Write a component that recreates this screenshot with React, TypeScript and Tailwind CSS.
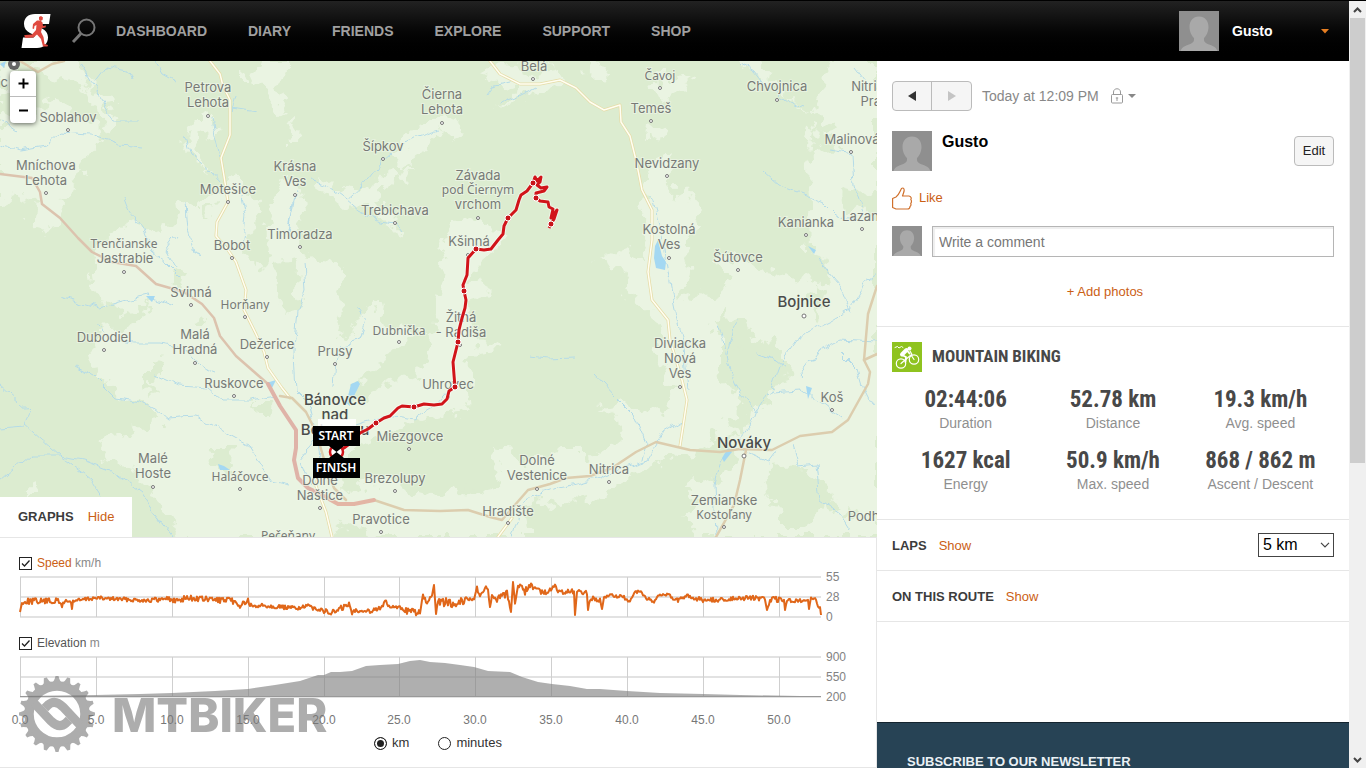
import React from "react";

type Size = "town" | "village" | "small";
type Place = { lines: string[]; x: number; y: number; size?: Size; dot?: [number, number] };

const places: Place[] = [
  { lines: ["Belá"], x: 534, y: 71, dot: [533, 79] },
  { lines: ["Čavoj"], x: 660, y: 80, size: "small", dot: [660, 88] },
  { lines: ["Temeš"], x: 651, y: 113, dot: [651, 121] },
  { lines: ["Chvojnica"], x: 777, y: 91, dot: [777, 100] },
  { lines: ["Nitrianske", "Pravno"], x: 882, y: 91 },
  { lines: ["Malinová"], x: 852, y: 144, dot: [851, 152] },
  { lines: ["Petrova", "Lehota"], x: 208, y: 92, dot: [208, 116] },
  { lines: ["Čierna", "Lehota"], x: 442, y: 99, dot: [442, 123] },
  { lines: ["Soblahov"], x: 68, y: 122, dot: [68, 130] },
  { lines: ["Mníchova", "Lehota"], x: 46, y: 170, dot: [46, 193] },
  { lines: ["Šípkov"], x: 383, y: 151, dot: [383, 159] },
  { lines: ["Krásna", "Ves"], x: 295, y: 171, dot: [295, 195] },
  { lines: ["Motešice"], x: 228, y: 194, dot: [228, 202] },
  { lines: ["Trebichava"], x: 395, y: 215, dot: [395, 223] },
  { lines: ["Timoradza"], x: 300, y: 239, dot: [300, 247] },
  { lines: ["Bobot"], x: 232, y: 250, dot: [232, 258] },
  { lines: ["Trenčianske"], x: 124, y: 248, size: "small" },
  { lines: ["Jastrabie"], x: 125, y: 263, dot: [124, 272] },
  { lines: ["Závada"], x: 478, y: 180 },
  { lines: ["pod Čiernym"], x: 478, y: 194, size: "small" },
  { lines: ["vrchom"], x: 478, y: 209, dot: [478, 218] },
  { lines: ["Nevidzany"], x: 667, y: 168, dot: [667, 176] },
  { lines: ["Kostolná", "Ves"], x: 669, y: 234, dot: [669, 258] },
  { lines: ["Kanianka"], x: 806, y: 227, dot: [806, 235] },
  { lines: ["Lazany"], x: 864, y: 221, dot: [862, 229] },
  { lines: ["Šútovce"], x: 738, y: 262, dot: [738, 270] },
  { lines: ["Kšinná"], x: 469, y: 246, dot: [468, 255] },
  { lines: ["Svinná"], x: 191, y: 297, dot: [191, 305] },
  { lines: ["Horňany"], x: 245, y: 309, size: "small", dot: [245, 317] },
  { lines: ["Dubodiel"], x: 104, y: 342, dot: [104, 350] },
  { lines: ["Malá", "Hradná"], x: 195, y: 339, dot: [195, 363] },
  { lines: ["Dežerice"], x: 267, y: 349, dot: [267, 357] },
  { lines: ["Prusy"], x: 335, y: 356, dot: [335, 364] },
  { lines: ["Dubnička"], x: 399, y: 335, size: "small", dot: [399, 342] },
  { lines: ["Žitná", "- Radiša"], x: 461, y: 322, dot: [460, 345] },
  { lines: ["Bojnice"], x: 804, y: 307, size: "town", dot: [804, 316] },
  { lines: ["Ruskovce"], x: 234, y: 388, dot: [234, 396] },
  { lines: ["Diviacka", "Nová", "Ves"], x: 680, y: 348, dot: [680, 387] },
  { lines: ["Uhrovec"], x: 448, y: 389, dot: [448, 397] },
  { lines: ["Bánovce", "nad", "Bebravou"], x: 335, y: 405, size: "town" },
  { lines: ["Koš"], x: 832, y: 402, dot: [832, 410] },
  { lines: ["Miezgovce"], x: 410, y: 441, dot: [409, 449] },
  { lines: ["Nováky"], x: 744, y: 448, size: "town", dot: [744, 456] },
  { lines: ["Malé", "Hoste"], x: 153, y: 463, dot: [153, 487] },
  { lines: ["Haláčovce"], x: 240, y: 481, size: "small", dot: [240, 489] },
  { lines: ["Dolné", "Naštice"], x: 320, y: 485, dot: [320, 508] },
  { lines: ["Brezolupy"], x: 395, y: 483, dot: [395, 491] },
  { lines: ["Dolné", "Vestenice"], x: 537, y: 465, dot: [537, 489] },
  { lines: ["Nitrica"], x: 609, y: 474, dot: [609, 482] },
  { lines: ["Hradište"], x: 508, y: 516, dot: [508, 523] },
  { lines: ["Pravotice"], x: 381, y: 524, dot: [381, 532] },
  { lines: ["Pečeňany"], x: 288, y: 540, size: "small" },
  { lines: ["Zemianske"], x: 724, y: 505 },
  { lines: ["Kostoľany"], x: 724, y: 519, size: "small", dot: [724, 527] },
  { lines: ["Podhradie"], x: 879, y: 521 },
];

const clearings = [
  "M0 108 L14 118 L38 122 L42 100 L55 94 L62 106 L72 118 L98 124 L100 140 L96 150 L82 160 L86 172 L70 178 L76 190 L60 196 L66 212 L46 236 L34 220 L36 204 L20 194 L0 204 Z",
  "M30 61 H78 L88 86 L98 92 L112 94 L118 104 L104 106 L110 118 L120 124 L106 130 L98 112 L84 84 L66 74 L56 82 L40 72 Z",
  "M0 64 L18 61 L12 90 L0 100 Z",
  "M188 128 L200 116 L214 116 L220 132 L206 138 L196 134 L192 146 L204 158 L210 172 L196 164 L184 150 Z",
  "M252 76 L260 61 L288 61 L286 76 L276 84 L290 110 L284 116 L270 100 L260 84 Z",
  "M288 122 L297 126 L296 142 L290 142 Z",
  "M240 74 l8 -2 l0 6 l-8 0 Z",
  "M92 286 L90 262 L100 244 L118 232 L132 222 L146 228 L160 240 L176 214 L184 204 L198 210 L206 196 L222 188 L234 172 L246 190 L260 206 L256 228 L246 246 L254 262 L262 276 L272 262 L264 232 L274 208 L276 190 L288 176 L300 192 L304 214 L296 236 L306 256 L330 260 L344 272 L336 290 L342 312 L336 330 L350 338 L362 316 L380 300 L384 326 L408 328 L410 342 L396 350 L378 362 L368 376 L350 386 L348 402 L364 398 L384 386 L404 380 L424 366 L432 340 L434 320 L440 286 L446 262 L440 244 L444 232 L462 216 L484 222 L500 232 L512 236 L500 246 L482 262 L470 278 L490 288 L484 294 L468 300 L470 326 L480 340 L504 346 L500 350 L474 352 L462 364 L474 370 L474 380 L464 394 L472 404 L454 414 L436 426 L450 434 L430 450 L444 462 L436 480 L462 492 L484 496 L504 484 L492 456 L508 444 L520 470 L540 456 L562 448 L578 448 L590 462 L606 450 L620 442 L616 414 L600 408 L620 404 L640 412 L664 408 L672 390 L664 372 L656 350 L662 324 L644 308 L622 290 L632 276 L600 260 L628 248 L644 262 L650 236 L640 206 L644 184 L652 166 L668 152 L672 168 L670 196 L680 202 L688 188 L696 204 L704 226 L690 232 L684 252 L690 276 L682 300 L700 292 L720 304 L716 330 L724 346 L734 350 L732 372 L740 386 L744 406 L730 424 L738 436 L720 442 L706 442 L694 452 L674 454 L660 460 L640 474 L620 484 L604 498 L576 500 L560 504 L536 500 L524 508 L530 537 H420 L380 537 L350 522 L330 537 H180 L166 514 L150 490 L130 470 L108 462 L98 436 L120 434 L134 440 L128 422 L148 432 L160 418 L146 400 L122 402 L110 382 L96 370 L92 340 L98 330 L124 328 L142 318 L150 300 L124 314 L106 304 Z",
  "M410 160 L430 146 L440 130 L456 140 L468 124 L440 116 L424 126 L410 138 L392 150 L400 168 L412 168 L406 182 L388 172 L372 186 L352 192 L328 182 L316 178 L314 184 L332 196 L346 208 L374 206 L396 232 L400 222 L376 196 L396 180 Z",
  "M480 72 L500 61 L516 64 L520 76 L560 70 L566 84 L540 90 L520 100 L496 108 L520 90 L504 84 Z",
  "M586 61 L604 64 L602 78 L588 76 Z",
  "M654 70 L672 84 L686 80 L690 86 L668 98 L656 92 Z",
  "M648 124 L662 130 L656 140 L646 142 Z",
  "M736 61 H760 L790 100 L812 112 L826 80 L832 61 H877 V537 H790 L768 512 L770 488 L786 470 L812 484 L830 496 L822 514 L800 530 L826 537 H700 L680 518 L704 504 L684 488 L700 478 L716 482 L736 462 L728 446 L748 424 L752 400 L766 410 L776 384 L774 350 L756 342 L748 326 L722 314 L716 304 L730 278 L712 264 L730 252 L756 268 L776 272 L792 282 L808 276 L832 286 L826 260 L808 248 L806 168 L814 156 L808 140 L812 128 L834 134 L824 120 L812 112 Z",
  "M24 490 L38 488 L36 500 L20 500 Z",
];

const woods = [
  "M860 196 L877 190 V224 L858 204 L842 212 L840 190 Z",
  "M812 152 L840 148 L816 128 Z",
  "M768 470 L800 468 L826 486 L836 504 L820 514 L800 528 L780 528 L776 504 L760 490 Z",
  "M846 506 L860 514 L848 520 Z",
  "M280 262 L298 260 L294 290 L300 302 L286 314 L278 300 Z",
  "M148 360 L162 362 L160 380 L150 382 L152 396 L142 388 L148 376 Z",
  "M256 402 L276 402 L272 416 L258 416 Z",
  "M208 450 L234 450 L232 472 L226 474 L216 462 Z",
  "M352 448 L386 438 L412 424 L440 416 L470 420 L480 440 L470 484 L440 496 L410 492 L398 480 L360 484 L344 494 L342 478 L352 466 Z",
  "M204 206 L212 204 L210 218 L204 216 Z",
  "M176 272 L186 276 L182 288 L172 282 Z",
  "M190 322 L206 318 L204 326 L190 326 Z",
  "M816 284 L826 296 L820 318 L812 304 Z",
  "M720 340 L750 346 L770 340 L790 368 L770 396 L752 412 L734 396 L720 368 Z",
  "M706 426 L716 430 L714 442 L702 436 Z",
];

const rivers = [
  "M80 64 L90 80 L100 92 L106 110 L114 120 L140 120",
  "M0 145 L20 150 L45 146 L60 132 L90 134 L120 144 L142 146",
  "M0 120 L14 130",
  "M94 82 L106 66 L128 70 L132 80",
  "M154 61 L162 74 L176 82",
  "M184 136 L190 154 L206 166 L218 180",
  "M212 118 L216 140 L220 156 M232 108 L256 112 M236 94 L232 112",
  "M124 196 L130 212 L144 232 L152 252 L166 264 L178 276",
  "M186 204 L188 230 L194 250 L200 258 M176 236 L166 250 L176 268",
  "M242 196 L246 214 L242 250 M294 196 L288 230 L292 212 L296 190",
  "M310 180 L330 188 L346 200 L362 186 L382 160 L402 142 L440 130",
  "M346 200 L360 212 L380 222 L396 224 L402 232",
  "M60 296 L100 308 L130 300 L148 296 L174 306",
  "M304 262 L306 290 L298 310 L294 350 L296 392 L310 406 L318 440 L322 480",
  "M0 385 L30 412 L24 424 L42 440 L60 456 L84 460 L110 470 L140 492 L152 510 L172 537",
  "M0 428 L24 426 M0 482 L30 456 L60 456 L90 478 L104 500 L110 520",
  "M96 322 L110 340 L130 344 L160 344 L184 348 L200 366 L216 372",
  "M76 366 L94 376 L116 398 L130 400 L140 402 L156 410 L166 418 L196 416 L222 430 L248 444 L262 466 L272 480 L290 484",
  "M154 374 L180 386 L208 388 L222 400 L252 400 L276 396",
  "M338 350 L336 360 L334 386 M340 346 L360 340 L366 320 L356 306",
  "M318 438 L300 460 L310 486",
  "M350 426 L390 416 L412 420 L436 406 L452 388",
  "M530 356 L548 358 L574 357",
  "M594 372 L616 396 L634 414 L646 442 L642 460",
  "M684 420 L664 432 L648 460 L622 468 L600 478 L578 484 L550 490 L530 496 L520 510 L512 537",
  "M652 196 L660 230 L666 262 L672 292 L678 320 L684 346 L688 390",
  "M718 322 L724 340 L728 366 L740 392 L756 410 L750 426 L738 440 L720 462 L714 484 L716 537",
  "M736 318 L732 336 L728 354",
  "M756 412 L772 388 L782 360 L796 340 L806 334 L830 322 L850 310 L866 282 L877 274",
  "M772 392 L800 390 L824 406 L842 420 M758 354 L776 360 L786 368",
  "M800 376 L820 350 L840 340 L877 342",
  "M840 352 L858 370 L864 390 L872 406",
  "M764 172 L780 186 L806 196 L824 204 L836 216 L862 222",
  "M740 62 L756 72 L770 90 L788 102 L804 108",
  "M830 150 L852 154 L854 186 L864 214 M854 66 L866 82",
  "M792 446 L798 466 L816 464 L820 500 L840 514 L850 530",
  "M740 450 L768 462 L780 446",
  "M820 261 L838 284 L850 312",
  "M500 104 L520 96 L536 88 M486 94 L492 86 L510 82",
];

const valleyRoads = [
  "M210 61 L220 74 L223 86 L230 100 L230 135 L221 158 L224 176 L228 202 L217 222 L216 236 L228 250 L236 262 L246 290 L244 310 L256 334 L264 352 L268 368 L282 388 L290 398",
  "M490 61 L500 74 L520 84 L540 84 L560 80 L576 88 L590 102 L604 110 L620 105 L621 122 L630 136 L636 160 L642 190 L652 210 L652 240 L648 272 L652 300 L668 320 L670 340 L682 380 L687 400 L684 420 L680 446",
  "M320 468 L316 486 L326 512 L332 537 M512 518 L498 537",
];

const route =
  "M336 452 L344 448 L352 442 L360 433 L368 429 L376 423 L384 418 L390 416 L398 408 L402 406 L414 407 L424 404 L434 405 L442 404 L447 399 L449 391 L455 387 L454 375 L453 362 L456 350 L458 342 L459 330 L462 318 L465 308 L466 300 L464 291 L463 285 L467 275 L468 258 L476 249 L484 250 L491 249 L498 240 L503 234 L504 226 L508 218 L516 210 L519 200 L521 195 L527 191 L533 183 L535 177 L537 181 L541 177 L540 182 L537 185 L541 188 L547 187 L544 191 L536 193 L536 198 L540 201 L548 202 L549 207 L553 209 L551 218 L557 210 L554 219 L551 224 L549 228";

const stops: [number, number][] = [
  [376, 423], [414, 407], [455, 387], [458, 342], [464, 291],
  [476, 249], [508, 218], [533, 183], [536, 198], [551, 224],
];

const speedKeys: [number, number, number][] = [
  [20, 612, 0], [22, 603, 1], [27, 601, 3], [58, 601, 3], [62, 606, 2], [64, 601, 3], [71, 602, 1], [72, 609, 0], [73, 601, 2],
  [95, 598, 2], [140, 600, 2], [162, 600, 3], [165, 597, 2], [173, 601, 3], [186, 598, 3], [233, 601, 3], [238, 606, 3],
  [248, 601, 3], [252, 608, 3], [260, 605, 2], [290, 608, 2], [310, 607, 3], [316, 607, 3], [320, 610, 2], [332, 613, 3], [340, 609, 3],
  [349, 604, 2], [352, 614, 1], [354, 610, 2], [370, 611, 2], [382, 607, 2], [386, 601, 2], [389, 607, 2], [402, 608, 2], [408, 611, 4], [420, 613, 3],
  [423, 596, 2], [426, 602, 3], [432, 598, 3], [434, 585, 0], [436, 614, 0], [438, 602, 3], [442, 602, 4], [456, 603, 5], [464, 600, 4],
  [474, 598, 2], [477, 588, 2], [480, 597, 2], [486, 586, 1], [488, 590, 1], [490, 607, 1], [492, 598, 3], [500, 599, 4], [507, 594, 5],
  [511, 612, 0], [513, 582, 0], [515, 603, 3], [518, 585, 2], [524, 592, 5], [528, 586, 4], [534, 586, 4], [543, 593, 2],
  [550, 591, 3], [555, 586, 2], [560, 593, 3], [574, 592, 3], [575, 615, 0], [577, 592, 3], [587, 592, 3], [588, 610, 0],
  [590, 599, 3], [600, 600, 3], [602, 609, 0], [604, 596, 2], [622, 596, 2], [630, 603, 2], [634, 594, 3], [641, 592, 3],
  [645, 597, 2], [655, 602, 2], [660, 594, 2], [670, 596, 2], [677, 601, 3], [685, 597, 3], [705, 600, 3], [720, 600, 2],
  [735, 598, 2], [753, 598, 3], [765, 599, 2], [767, 610, 0], [770, 600, 3], [784, 599, 3], [785, 610, 0], [787, 600, 2],
  [800, 601, 2], [808, 599, 2], [809, 609, 0], [811, 598, 1], [816, 599, 1], [818, 608, 2], [820, 607, 1], [821, 615, 0],
];

function speedPath() {
  let d = "";
  let seed = 7;
  for (let i = 0; i < speedKeys.length - 1; i++) {
    const [x0, y0, a0] = speedKeys[i];
    const [x1, y1, a1] = speedKeys[i + 1];
    for (let x = x0; x < x1; x++) {
      const t = (x - x0) / (x1 - x0);
      seed = (seed * 1103515245 + 12345) % 2147483648;
      const noise = (seed / 2147483648 - 0.5) * 2 * (a0 + (a1 - a0) * t);
      d += `${d ? "L" : "M"}${x} ${(y0 + (y1 - y0) * t + noise).toFixed(1)}`;
    }
  }
  return d + "L821 615";
}

const elevation =
  "M20 696 L96 695 L140 694 L172 693 L215 691 L248 689 L275 685 L300 681 L318 675 L324 675 L331 672 L340 672 L352 671 L366 666 L380 665 L398 664 L410 661 L420 660 L430 662 L445 663 L460 665 L474 667 L488 671 L510 672 L522 677 L538 682 L552 684 L570 686 L587 689 L600 689 L627 691 L660 693 L703 694 L740 695 L800 696 L821 697 V697 H20 Z";

const ticks = [20, 96, 172, 248, 324, 399, 475, 551, 627, 703, 779];

const labelStyles: Record<Size, string> = {
  town: "fill-[#4a4c4a] text-[15px] font-medium",
  village: "fill-[#777a76] text-[13px]",
  small: "fill-[#777a76] text-[12px]",
};

function PlaceLabel({ place }: { place: Place }) {
  const size = place.size ?? "village";
  const family = size === "small" ? '"Noto Sans", sans-serif' : 'Inter, "Noto Sans", sans-serif';
  return (
    <g>
      {place.dot && <circle cx={place.dot[0]} cy={place.dot[1]} r={size === "town" ? 2 : 1.5} fill="#fff" stroke="#777" strokeWidth="1" />}
      <text
        textAnchor="middle"
        className={labelStyles[size]}
        fontFamily={family}
        stroke="#eef6e8"
        strokeWidth="2"
        strokeOpacity="0.7"
        paintOrder="stroke"
      >
        {place.lines.map((line, i) => (
          <tspan key={line} x={place.x} y={place.y + i * 15}>{line}</tspan>
        ))}
      </text>
    </g>
  );
}

function Flag({ x, y, text }: { x: number; y: number; text: string }) {
  return (
    <g>
      <rect x={x - 23} y={y} width="47" height="20" fill="#000" />
      <text x={x} y={y + 14} textAnchor="middle" fontFamily='"Noto Sans", sans-serif' className="fill-white text-[12px] font-semibold">{text}</text>
    </g>
  );
}

function RouteMap() {
  return (
    <div className="relative">
      <svg viewBox="0 61 877 476" className="block h-auto w-full" role="img" aria-label="Route map">
        <defs>
          <filter id="ragged" x="0" y="0" width="1" height="1">
            <feTurbulence type="fractalNoise" baseFrequency="0.07" numOctaves="3" seed="4" result="n" />
            <feDisplacementMap in="SourceGraphic" in2="n" scale="26" xChannelSelector="R" yChannelSelector="G" />
          </filter>
          <filter id="wavy" x="0" y="0" width="1" height="1">
            <feTurbulence type="fractalNoise" baseFrequency="0.08" numOctaves="2" seed="9" result="n" />
            <feDisplacementMap in="SourceGraphic" in2="n" scale="10" xChannelSelector="R" yChannelSelector="G" />
          </filter>
        </defs>
        <rect y="61" width="877" height="476" fill="#dcecd0" />
        <g filter="url(#ragged)">
          <rect x="-20" y="41" width="917" height="516" fill="#dcecd0" />
          {clearings.map((d) => <path key={d} d={d} fill="#eaf4e2" />)}
          {woods.map((d) => <path key={d} d={d} fill="#dcecd0" />)}
        </g>
        <g filter="url(#wavy)" fill="none" stroke="#b4dbe8" strokeWidth="1">
          {rivers.map((d) => <path key={d} d={d} />)}
        </g>
        <g fill="#a4d8f2">
          <path d="M655 246 L658 240 L662 256 L666 262 L665 270 L656 268 L654 258 Z" />
          <path d="M722 458 L728 448 L732 452 L724 462 Z" />
          <path d="M348 396 L351 384 L358 381 L360 384 L354 396 Z M345 402 L350 396 L350 406 Z" />
          <path d="M146 296 L155 296 L152 302 Z M218 464 L224 466 L230 470 L220 470 Z" />
          <path d="M808 246 L816 250 L814 254 Z M806 386 L812 388 L808 399 Z M0 64 L6 61 L4 68 Z" />
          <path d="M266 383 L276 380 L272 388 Z" />
        </g>
        <g fill="none" strokeLinejoin="round" strokeLinecap="round">
          <g stroke="#e6dca8" strokeWidth="3">
            {valleyRoads.map((d) => <path key={d} d={d} />)}
          </g>
          <g stroke="#fffef2" strokeWidth="1.500">
            {valleyRoads.map((d) => <path key={d} d={d} />)}
          </g>
          <g stroke="#dccdae" strokeWidth="2.500">
            <path d="M280 396 L292 398 L306 412 L316 432 L326 466 L334 488 L346 500" />
            <path d="M374 500 L404 510 L440 511 L468 510 L490 517 L502 520 L514 506 L528 490 L550 484 L566 478 L590 476 L612 468 L636 452 L656 442 L690 450 L720 452 L740 449 L772 450 L800 436 L832 432 L848 420 L868 384 L870 372 L864 360 L868 314 L877 286" />
            <path d="M746 450 L740 480 L734 505 L716 537 M864 360 L877 354" />
            <path d="M20 61 L38 72 L52 64 L64 61" />
          </g>
          <path d="M0 174 L32 178 L40 192 L42 204 L60 218 L78 238 L92 252 L112 262 L136 266 L156 284 L184 292 L202 304 L214 318 L220 336 L236 356 L268 384" stroke="#dcc3ae" strokeWidth="2.500" />
          <path d="M268 384 L280 406 L296 430 L296 448 L294 460 L298 478 L308 488 L320 494" stroke="#dfb3a8" strokeWidth="4" />
          <path d="M320 494 L338 504 L354 504 L374 500" stroke="#e3b5a5" strokeWidth="4" />
        </g>
        {places.map((p) => <PlaceLabel key={p.lines.join(" ") + p.x} place={p} />)}
        <circle cx="14" cy="64" r="6" fill="#666" />
        <circle cx="14" cy="64" r="2" fill="#fff" />
        <text x="-10" y="87" className="fill-[#777a76] text-[13px]" fontFamily="Inter, sans-serif">čic</text>
        <path d={route} fill="none" stroke="#fff" strokeOpacity="0.5" strokeWidth="5" strokeLinejoin="round" />
        <path d={route} fill="none" stroke="#d1141a" strokeWidth="3" strokeLinejoin="round" />
        {stops.map(([x, y]) => <circle key={`${x}-${y}`} cx={x} cy={y} r="3" fill="#c8141a" stroke="#fff" strokeWidth="1" />)}
        <rect x="318" y="419" width="38" height="7" fill="#fff" fillOpacity="0.85" />
        <circle cx="336.500" cy="452" r="6.500" fill="#fff" stroke="#d1141a" strokeWidth="2.500" />
        <path d="M329 446 H344 L336.500 452 Z M329 458 H344 L336.500 452 Z" fill="#000" />
        <Flag x={336} y={426} text="START" />
        <Flag x={336} y={458} text="FINISH" />
      </svg>
      <div className="absolute left-2.5 top-2.5 flex w-[26px] flex-col divide-y divide-[#bbb] overflow-hidden rounded bg-white shadow-[0_1px_5px_rgba(0,0,0,0.6)]">
        <button type="button" aria-label="Zoom in" className="flex h-[26px] items-center justify-center">
          <svg width="11" height="11" viewBox="0 0 11 11"><path d="M5.500 0.500V10.500M0.500 5.500H10.500" stroke="#000" strokeWidth="2" /></svg>
        </button>
        <button type="button" aria-label="Zoom out" className="flex h-[26px] items-center justify-center">
          <svg width="11" height="11" viewBox="0 0 11 11"><path d="M1 5.500H10" stroke="#000" strokeWidth="2" /></svg>
        </button>
      </div>
      <div className="absolute bottom-0 left-0 flex h-10 items-center gap-3.5 bg-white px-[18px] text-[13px]">
        <h2 className="font-bold text-[#3c3c3c]">GRAPHS</h2>
        <a href="#graphs" className="text-[#cb6015]">Hide</a>
      </div>
    </div>
  );
}

function Grid({ rows, labels }: { rows: number[]; labels: string[] }) {
  return (
    <g>
      {rows.map((y) => <path key={y} d={`M20 ${y}H821`} stroke="#e2e2e2" strokeWidth="2" />)}
      {ticks.map((x) => <path key={x} d={`M${x + 0.5} ${rows[0]}V${rows[2]}`} stroke="#cfcfcf" strokeWidth="1" />)}
      {labels.map((l, i) => (
        <text key={l} x="826" y={rows[i] + 4} className="fill-[#828282] text-[12px]">{l}</text>
      ))}
    </g>
  );
}

const tickBox = "grid h-[13px] w-[13px] appearance-none place-content-center border border-[#222] bg-white";

function GraphToggle({ id, name, unit, color }: { id: string; name: string; unit: string; color: string }) {
  return (
    <div className="flex h-5 items-center gap-[5px] pl-[19px] text-[12px]">
      <span className="relative flex">
        <input id={id} type="checkbox" defaultChecked className={tickBox} />
        <svg className="pointer-events-none absolute left-0 top-0" width="13" height="13" viewBox="0 0 13 13">
          <path d="M3 6.500L5.500 9L10.500 3.500" fill="none" stroke="#222" strokeWidth="1.300" />
        </svg>
      </span>
      <label htmlFor={id} className="text-[#888]"><span className={color}>{name}</span> {unit}</label>
    </div>
  );
}

function Gear() {
  const teeth = Array.from({ length: 20 }, (_, i) => i * 18);
  return (
    <svg width="78" height="78" viewBox="-39 -39 78 78" aria-hidden="true">
      <circle r="28" fill="none" stroke="#777" strokeWidth="9.500" />
      {teeth.map((a) => <path key={a} d="M-5.200 -31 Q-2.500 -33 -1.500 -38 H1.500 Q2.500 -33 5.200 -31 Z" fill="#777" transform={`rotate(${a})`} />)}
      <path d="M-23 -11 L-6 7 Q2 15 9 9 L12 6 M23 11 L6 -7 Q-2 -15 -9 -9 L-12 -6" fill="none" stroke="#777" strokeWidth="9" />
    </svg>
  );
}

function Graphs() {
  return (
    <section className="relative border-b border-r border-t border-[#e6e6e6] pb-3.5 pt-[15px]">
      <GraphToggle id="speed" name="Speed" unit="km/h" color="text-[#cb6015]" />
      <svg viewBox="0 573 876 50" className="block h-auto w-full overflow-visible" role="img" aria-label="Speed graph">
        <Grid rows={[577, 597, 617]} labels={["55", "28", "0"]} />
        <path d={speedPath()} fill="none" stroke="#e0671a" strokeWidth="2" strokeLinejoin="round" />
      </svg>
      <div className="h-2.5" />
      <GraphToggle id="elevation" name="Elevation" unit="m" color="text-[#555]" />
      <svg viewBox="0 653 876 80" className="block h-auto w-full overflow-visible" role="img" aria-label="Elevation graph">
        <Grid rows={[657, 677, 697]} labels={["900", "550", "200"]} />
        <path d={elevation} fill="#808080" fillOpacity="0.63" />
        <path d="M20 696.500H821" stroke="#999" />
        {ticks.map((x, i) => (
          <text key={x} x={x} y="724" textAnchor="middle" className="fill-[#777] text-[12px]">{(i * 5).toFixed(1)}</text>
        ))}
      </svg>
      <fieldset className="flex h-5 items-center justify-center gap-[29px] text-[13px] text-[#333]">
        <label className="flex items-center gap-[5px]">
          <input type="radio" name="axis" defaultChecked className="h-[13px] w-[13px] appearance-none rounded-full border border-[#222] bg-[#222] shadow-[inset_0_0_0_2px_white]" />
          km
        </label>
        <label className="flex items-center gap-[5px]">
          <input type="radio" name="axis" className="h-[13px] w-[13px] appearance-none rounded-full border border-[#222] bg-white" />
          minutes
        </label>
      </fieldset>
      <div className="pointer-events-none absolute bottom-3.5 left-[18px] flex items-center gap-4 opacity-60">
        <Gear />
        <span className="font-[Inter,sans-serif] text-[47px] font-extrabold leading-none text-[#777]">MTBIKER</span>
      </div>
    </section>
  );
}

function Avatar({ className }: { className: string }) {
  return (
    <svg viewBox="0 0 40 40" className={className} role="img" aria-label="Gusto">
      <rect width="40" height="40" fill="#8f8f8f" />
      <path d="M20 5.500C26 5.500 29.500 10 29.500 16C29.500 21 27 25 25 27C24.500 31 26.500 32 30 33.500C34 35 37 36 38.500 40H1.500C3 36 6 35 10 33.500C13.500 32 15.500 31 15 27C13 25 10.500 21 10.500 16C10.500 10 14 5.500 20 5.500Z" fill="#a9a9a9" />
    </svg>
  );
}

function Logo() {
  return (
    <svg width="30" height="36" viewBox="0 0 30 36" aria-hidden="true">
      <path d="M29.500 1H14C7 1 3 5 3 11C3 15 5 18 9 20L13 22C14 23 13.500 24.500 12 24.500H2L0.500 35H16C23 35 27 30 27 24.500C27 20 24.500 17.500 21 15.500L18 13.500C17 12.500 17.500 11 19 11H28Z" fill="#fff" />
      <path d="M16 7.500L19.500 7.500L21.500 9.500L22 13L25 12.500L24.500 14.500L21 15L20 19L22.500 24L23.500 31L27 32L26.500 33.500H22L20 26L16 21.500L12.500 24.500L4.500 25L3 22.500L4.500 22L11 21.500L15 17L15.500 12L13.500 13L13 16L11.500 15.500L12 11Z" fill="#e04a40" />
      <path d="M18 4L20 3L22 4.500L21.500 7L19.500 8L18 6.500Z" fill="#e04a40" />
    </svg>
  );
}

function Header() {
  const items = ["Dashboard", "Diary", "Friends", "Explore", "Support", "Shop"];
  return (
    <header className="flex h-[60px] items-center bg-gradient-to-b from-[#222] to-black pl-[21px] pr-5">
      <a href="#home" aria-label="Home"><Logo /></a>
      <button type="button" aria-label="Search" className="ml-5">
        <svg width="26" height="26" viewBox="0 0 26 26" fill="none" stroke="#777" strokeWidth="2">
          <circle cx="15.500" cy="9.500" r="8" />
          <path d="M10 15.500L2 24" strokeWidth="3" />
        </svg>
      </button>
      <nav className="ml-[19px] flex gap-[41px] text-[14px] font-bold uppercase text-[#a0a0a0]">
        {items.map((item) => <a key={item} href={`#${item.toLowerCase()}`}>{item}</a>)}
      </nav>
      <button type="button" className="ml-auto flex w-[150px] items-center gap-[13px] text-[14px] font-bold text-white">
        <Avatar className="h-10 w-10" />
        Gusto
        <svg className="ml-auto" width="8" height="5" viewBox="0 0 8 5"><path d="M0 0H8L4 4.500Z" fill="#e67e22" /></svg>
      </button>
    </header>
  );
}

const stats = [
  ["02:44:06", "Duration"],
  ["52.78 km", "Distance"],
  ["19.3 km/h", "Avg. speed"],
  ["1627 kcal", "Energy"],
  ["50.9 km/h", "Max. speed"],
  ["868 / 862 m", "Ascent / Descent"],
];

const narrow = "font-['Liberation_Sans_Narrow','Roboto_Condensed',sans-serif]";

function Sidebar() {
  return (
    <aside className="flex w-[472px] shrink-0 flex-col">
      <section className="border-b border-[#e6e6e6] px-[15px] pb-6 pt-5">
        <div className="flex h-[30px] items-center">
          <div className="flex h-full divide-x divide-[#bbb] overflow-hidden rounded border border-[#bbb] bg-[#f5f5f5]">
            <button type="button" aria-label="Previous workout" className="flex w-[39px] items-center justify-center">
              <svg width="8" height="10" viewBox="0 0 8 10"><path d="M8 0V10L0 5Z" fill="#333" /></svg>
            </button>
            <button type="button" aria-label="Next workout" className="flex w-[39px] items-center justify-center">
              <svg width="8" height="10" viewBox="0 0 8 10"><path d="M0 0V10L8 5Z" fill="#c4c4c4" /></svg>
            </button>
          </div>
          <span className="ml-2.5 text-[14px] text-[#888]">Today at 12:09 PM</span>
          <button type="button" aria-label="Privacy" className="ml-3 flex items-center gap-[5px]">
            <svg width="12" height="16" viewBox="0 0 12 16" fill="none" stroke="#999">
              <rect x="0.500" y="6.500" width="11" height="8.500" rx="1" />
              <path d="M2.500 6.500V4C2.500 -0.300 9.500 -0.300 9.500 4V6.500M6 9.500V13M4.800 10H7.200" />
            </svg>
            <svg width="8" height="4" viewBox="0 0 8 4"><path d="M0 0H8L4 4Z" fill="#888" /></svg>
          </button>
        </div>
        <div className="mt-5 flex h-10 items-center">
          <Avatar className="h-10 w-10" />
          <h1 className="ml-2.5 self-start text-[16px] font-bold leading-[22px] text-black">Gusto</h1>
          <button type="button" className="ml-auto h-[30px] w-10 rounded border border-[#bbb] bg-[#f5f5f5] text-[13px] text-[#222]">Edit</button>
        </div>
        <button type="button" className="mt-[15px] flex h-6 items-center gap-[7px] text-[13px] text-[#cb6015]">
          <svg width="20" height="23" viewBox="0 0 20 23" fill="none" stroke="#d0702c" strokeWidth="1.200" strokeLinejoin="round">
            <path d="M0.600 11.500L4 10C7 8 8 4 9.500 1.500C11.500 0 12.500 2 12 4.500L10.500 9H17C19.500 9.500 19.500 11.500 18.800 12.500C19.800 14 19.500 15.500 18.700 16.500C19.300 18 18.800 19 18 19.500C18 21 17.500 22 15.500 22H4L0.600 20.500Z" />
          </svg>
          Like
        </button>
        <div className="mt-4 flex gap-2.5">
          <Avatar className="h-[30px] w-[30px]" />
          <input
            aria-label="Write a comment"
            placeholder="Write a comment"
            className="h-[31px] min-w-0 flex-1 border border-[#b5b5b5] bg-white px-1.5 text-[14px] shadow-[inset_2px_2px_1px_#eeeeee] placeholder:text-[#777]"
          />
        </div>
        <div className="mt-[25px] flex h-5 items-center justify-center pr-4 text-[13px] text-[#cb6015]">
          <a href="#photos">+ Add photos</a>
        </div>
      </section>
      <section className="border-b border-[#e6e6e6] px-[15px] pb-[27px] pt-[15px]">
        <div className="flex h-[30px] items-center gap-2.5">
          <svg width="30" height="30" viewBox="0 0 30 30" aria-hidden="true">
            <rect width="30" height="30" fill="#8fc31f" />
            <g fill="none" stroke="#fff" strokeLinecap="round" strokeLinejoin="round">
              <circle cx="9" cy="21.500" r="4.700" strokeWidth="1.200" />
              <circle cx="22" cy="17.500" r="4.700" strokeWidth="1.200" />
              <path d="M3 5.500L5.500 4.500L7 6L9.500 4.500L11 5.500" strokeWidth="1" />
              <path d="M9 21.500L13 18L19 13L22 17.500M18 9L20 12.500L19 13" strokeWidth="1.200" />
              <path d="M10 12.500L14.500 8" strokeWidth="4" />
              <path d="M10 13L14 15L13.500 20M15.500 9L17.500 11.500" strokeWidth="1.800" />
            </g>
            <circle cx="17.500" cy="6.500" r="2" fill="#fff" />
          </svg>
          <h2 className={`${narrow} text-[17px] font-bold text-[#484848]`}>MOUNTAIN BIKING</h2>
        </div>
        <dl className="mt-[13px] grid grid-cols-3 gap-y-[15px] text-center">
          {stats.map(([value, name]) => (
            <div key={name} className="flex flex-col-reverse">
              <dt className="text-[14px] leading-4 text-[#8f8f8f]">{name}</dt>
              <dd className={`${narrow} text-[23px] font-bold leading-[30px] text-[#484848]`}>{value}</dd>
            </div>
          ))}
        </dl>
      </section>
      <section className="flex h-[51px] items-center border-b border-[#e6e6e6] px-[15px] text-[13px]">
        <h2 className="pt-0.5 font-bold text-[#3c3c3c]">LAPS</h2>
        <a href="#laps" className="ml-3 pt-0.5 text-[#cb6015]">Show</a>
        <div className="relative ml-auto flex items-center">
          <select aria-label="Lap length" className="h-6 w-[76px] appearance-none border border-[#444] bg-white pl-1 text-[16px] leading-none text-black">
            <option>5 km</option>
            <option>10 km</option>
          </select>
          <svg className="pointer-events-none absolute right-1" width="10" height="6" viewBox="0 0 10 6"><path d="M1 0.800L5 4.800L9 0.800" fill="none" stroke="#444" strokeWidth="1.200" /></svg>
        </div>
      </section>
      <section className="flex h-[51px] items-center border-b border-[#e6e6e6] px-[15px] text-[13px]">
        <h2 className="pt-0.5 font-bold text-[#3c3c3c]">ON THIS ROUTE</h2>
        <a href="#route" className="ml-3 pt-0.5 text-[#cb6015]">Show</a>
      </section>
      <footer className="mt-[100px] border-t border-[#14242f] bg-[#274355] px-[30px] py-[29px]">
        <h2 className="text-[13px] font-bold leading-5 text-[#eaf1f5]">SUBSCRIBE TO OUR NEWSLETTER</h2>
      </footer>
    </aside>
  );
}

function ScrollTrack() {
  return (
    <div aria-hidden="true" className="flex w-[17px] shrink-0 flex-col items-center bg-[#f0f0f0]">
      <div className="flex h-[17px] items-center">
        <svg width="9" height="6" viewBox="0 0 9 6"><path d="M1 5L4.500 1.500L8 5" fill="none" stroke="#444" strokeWidth="2" /></svg>
      </div>
      <div className="h-[58%] w-[15px] bg-[#cdcdcd]" />
      <div className="mt-auto flex h-[17px] items-center">
        <svg width="9" height="6" viewBox="0 0 9 6"><path d="M1 1L4.500 4.500L8 1" fill="none" stroke="#444" strokeWidth="2" /></svg>
      </div>
    </div>
  );
}

export default function App() {
  return (
    <div className="flex h-screen overflow-hidden border-t border-black bg-white font-['Liberation_Sans',Arial,sans-serif]">
      <div className="min-w-0 flex-1">
        <Header />
        <main className="flex">
          <div className="min-w-0 flex-1">
            <RouteMap />
            <Graphs />
          </div>
          <Sidebar />
        </main>
      </div>
      <ScrollTrack />
    </div>
  );
}
